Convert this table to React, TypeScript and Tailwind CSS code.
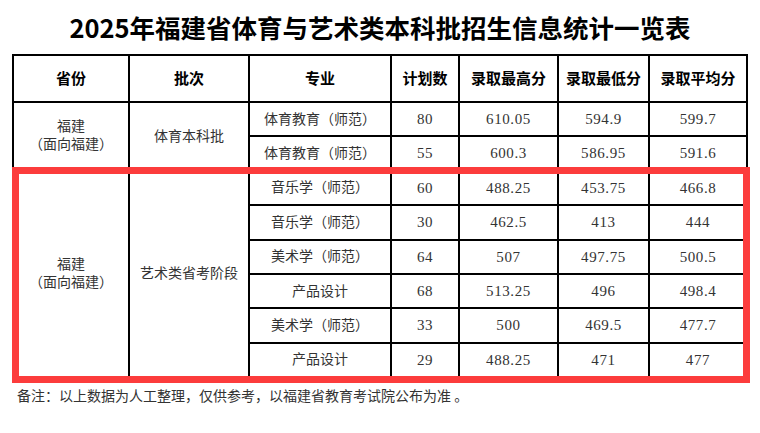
const cols = [116, 120, 142, 68, 99, 91, 98];

const headers = ["省份", "批次", "专业", "计划数", "录取最高分", "录取最低分", "录取平均分"];

const sports = [
  ["体育教育（师范）", "80", "610.05", "594.9", "599.7"],
  ["体育教育（师范）", "55", "600.3", "586.95", "591.6"],
];

const arts = [
  ["音乐学（师范）", "60", "488.25", "453.75", "466.8"],
  ["音乐学（师范）", "30", "462.5", "413", "444"],
  ["美术学（师范）", "64", "507", "497.75", "500.5"],
  ["产品设计", "68", "513.25", "496", "498.4"],
  ["美术学（师范）", "33", "500", "469.5", "477.7"],
  ["产品设计", "29", "488.25", "471", "477"],
];

const cell = "border-2 border-black text-center align-middle";

function Group({ rows, batch }: { rows: string[][]; batch: string }) {
  return (
    <>
      {rows.map((r, i) => (
        <tr key={i} className="h-[34.4px]">
          {i === 0 && (
            <>
              <td rowSpan={rows.length} className={cell + " leading-[18px]"}>
                福建
                <br />
                （面向福建）
              </td>
              <td rowSpan={rows.length} className={cell}>
                {batch}
              </td>
            </>
          )}
          {r.map((v, j) => (
            <td key={j} className={cell + (j === 0 ? "" : " text-[15px] tracking-[0.6px]")}>
              {v}
            </td>
          ))}
        </tr>
      ))}
    </>
  );
}

export default function App() {
  return (
    <div className="w-[760px] h-[433px] bg-white overflow-hidden">
      <h1 className="h-[54px] flex items-center justify-center text-[25.5px] font-bold text-black font-['Noto_Sans_CJK_SC',sans-serif]">
        2025年福建省体育与艺术类本科批招生信息统计一览表
      </h1>

      <div className="relative ml-[12px] w-[734px]">
        <table className="w-[734px] table-fixed border-collapse border-2 border-black text-[14px] text-[#333] font-['Liberation_Serif','Noto_Sans_CJK_SC',serif]">
          <colgroup>
            {cols.map((w, i) => (
              <col key={i} style={{ width: w }} />
            ))}
          </colgroup>
          <thead>
            <tr className="h-[47px]">
              {headers.map((h) => (
                <th
                  key={h}
                  className={cell + " text-[15px] font-bold text-black font-['Noto_Sans_CJK_SC',sans-serif]"}
                >
                  {h}
                </th>
              ))}
            </tr>
          </thead>
          <tbody>
            <Group rows={sports} batch="体育本科批" />
            <Group rows={arts} batch="艺术类省考阶段" />
          </tbody>
        </table>

        {/* red highlight over the art rows */}
        <div className="absolute left-0 top-[113px] w-[738px] h-[216px] border-[7px] border-[#fc3c3c] pointer-events-none" />
      </div>

      <p className="mt-[7px] ml-[17px] text-[14px] leading-[20px] text-[#333] font-['Noto_Sans_CJK_SC',sans-serif]">
        备注：以上数据为人工整理，仅供参考，以福建省教育考试院公布为准 。
      </p>
    </div>
  );
}
